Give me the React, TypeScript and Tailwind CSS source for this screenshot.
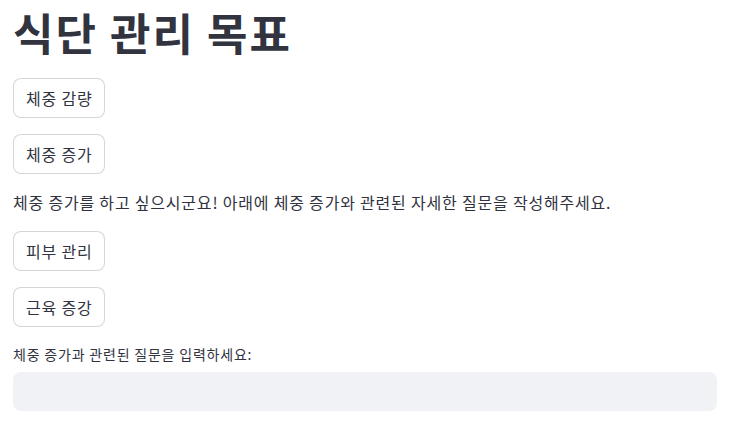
export default function App() {
  const goals = ["체중 감량", "체중 증가"];
  const more = ["피부 관리", "근육 증강"];

  return (
    <div
      className="min-h-[424px] w-full bg-white px-[13px] pt-[6px] text-[#31333f]"
      style={{ fontFamily: '"Noto Sans CJK KR", "Noto Sans", sans-serif' }}
    >
      <h1 className="text-[44px] font-bold leading-[53px] tracking-[2px]">식단 관리 목표</h1>

      <div className="mt-[19px] flex flex-col items-start gap-4">
        {goals.map((g) => (
          <button
            key={g}
            className="h-10 rounded-lg border border-[#31333f]/20 bg-white px-3 text-base leading-none tracking-[0.8px]"
          >
            {g}
          </button>
        ))}

        <p className="text-base leading-[24px] mb-[1px] tracking-[0.8px]">
          체중 증가를 하고 싶으시군요! 아래에 체중 증가와 관련된 자세한 질문을 작성해주세요.
        </p>

        {more.map((g) => (
          <button
            key={g}
            className="h-10 rounded-lg border border-[#31333f]/20 bg-white px-3 text-base leading-none tracking-[0.8px]"
          >
            {g}
          </button>
        ))}
      </div>

      <label className="mt-[17px] block text-sm leading-5 tracking-[0.8px]">체중 증가과 관련된 질문을 입력하세요:</label>
      <input
        type="text"
        className="mt-2 block h-[39px] w-full rounded-lg bg-[#f0f2f6] px-3 text-base outline-none"
      />
    </div>
  );
}
